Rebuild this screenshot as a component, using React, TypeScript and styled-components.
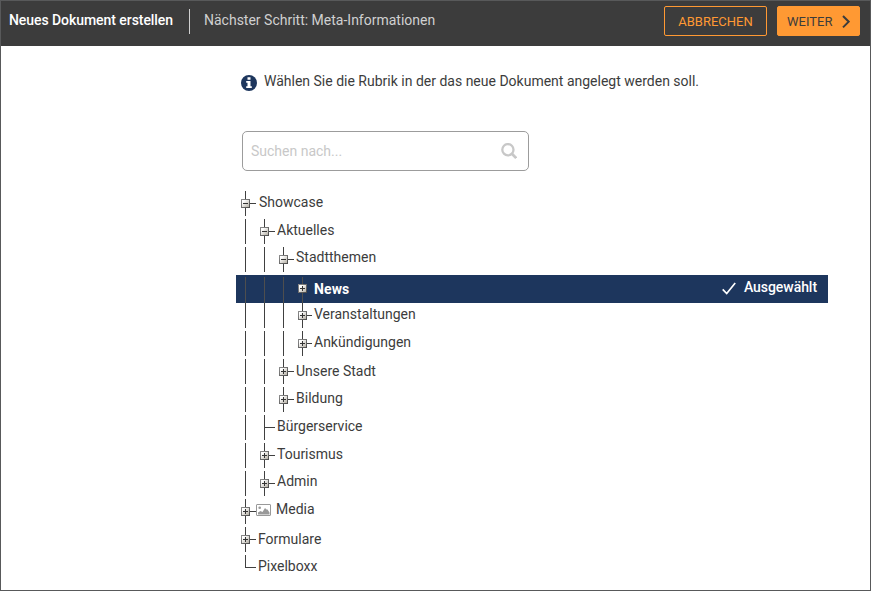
import React from 'react';
import styled, { createGlobalStyle } from 'styled-components';

const GlobalStyle = createGlobalStyle`
  *, *::before, *::after { box-sizing: border-box; }
  body { margin: 0; background: #fff; font-family: Roboto, sans-serif; }
`;

const Window = styled.div`
  width: 871px;
  height: 591px;
  overflow: hidden;
  border: 1px solid #58595a;
  background: #fff;
  color: #3c3c3c;
  font-size: 14px;
  line-height: 20px;
`;

const Header = styled.header`
  display: flex;
  align-items: flex-start;
  height: 45px;
  padding: 5px 10px 0 8px;
  background: #3c3c3c;
`;

const Title = styled.h1`
  width: 181px;
  height: 25px;
  margin: 3px 0 0;
  padding-top: 1px;
  border-right: 1px solid #d0d0d0;
  color: #fff;
  font-size: 14px;
  font-weight: 500;
  letter-spacing: -0.06px;
  line-height: 20px;
  white-space: nowrap;
`;

const NextStep = styled.div`
  flex: 1;
  padding: 4px 0 0 14px;
  color: #d0d0d0;
`;

const Button = styled.button<{ $primary?: boolean }>`
  display: flex;
  align-items: center;
  justify-content: ${(p) => (p.$primary ? 'flex-start' : 'center')};
  gap: 10px;
  width: ${(p) => (p.$primary ? 83 : 103)}px;
  height: 30px;
  margin-left: ${(p) => (p.$primary ? 10 : 0)}px;
  padding: ${(p) => (p.$primary ? '1px 0 0 9px' : '1px 0 0')};
  border: 1px solid #ff9933;
  border-radius: 2px;
  background: ${(p) => (p.$primary ? '#ff9933' : 'transparent')};
  color: ${(p) => (p.$primary ? '#3c3c3c' : '#ff9933')};
  font: 400 13px/20px Roboto, sans-serif;
`;

const Content = styled.main`
  width: 592px;
  margin-left: 235px;
  padding-top: 25px;
`;

const Hint = styled.div`
  display: flex;
  align-items: flex-start;
  gap: 7px;
  height: 60px;
  padding-left: 5px;
  white-space: nowrap;

  svg { margin-top: 4px; }
`;

const Search = styled.label`
  display: flex;
  align-items: center;
  justify-content: space-between;
  width: 287px;
  height: 40px;
  margin-left: 6px;
  padding: 0 11px 0 8px;
  border: 1px solid #9c9c9c;
  border-radius: 5px;
`;

const SearchInput = styled.input`
  width: 220px;
  padding: 0;
  border: 0;
  outline: 0;
  background: transparent;
  font: 400 14px/20px Roboto, sans-serif;

  &::placeholder { color: #c8c8c8; opacity: 1; }
`;

const Tree = styled.div`
  margin-top: 20px;
`;

const Row = styled.div<{ $selected?: boolean }>`
  display: flex;
  align-items: flex-start;
  height: 28px;
  padding-left: 5px;
  background: ${(p) => (p.$selected ? '#1d365d' : 'transparent')};
  color: ${(p) => (p.$selected ? '#fff' : '#3c3c3c')};

  > svg { flex: none; }
`;

const Label = styled.span<{ $top: number; $gap: number; $bold?: boolean; $spacing: number }>`
  flex: 1;
  margin-top: ${(p) => p.$top}px;
  padding-left: ${(p) => p.$gap}px;
  font-weight: ${(p) => (p.$bold ? 700 : 400)};
  letter-spacing: ${(p) => p.$spacing}px;
  white-space: nowrap;
`;

const Chosen = styled.span`
  display: flex;
  gap: 8px;
  margin: 2px 11px 0 0;
  font-weight: 500;
  letter-spacing: -0.05px;

  svg { margin-top: 5px; }
`;

type Kind = 'plus' | 'minus' | 'leaf' | 'last';

interface Node {
  label: string;
  depth: number;
  kind: Kind;
  top: number;
  gap?: number;
  spacing?: number;
  selected?: boolean;
  media?: boolean;
}

const nodes: Node[] = [
  { label: 'Showcase', depth: 0, kind: 'minus', top: 1, gap: 3 },
  { label: 'Aktuelles', depth: 1, kind: 'minus', top: 1 },
  { label: 'Stadtthemen', depth: 2, kind: 'minus', top: 0 },
  { label: 'News', depth: 3, kind: 'plus', top: 4, spacing: 0.1, selected: true },
  { label: 'Veranstaltungen', depth: 3, kind: 'plus', top: 1 },
  { label: 'Ankündigungen', depth: 3, kind: 'plus', top: 1 },
  { label: 'Unsere Stadt', depth: 2, kind: 'plus', top: 2 },
  { label: 'Bildung', depth: 2, kind: 'plus', top: 1 },
  { label: 'Bürgerservice', depth: 1, kind: 'leaf', top: 1 },
  { label: 'Tourismus', depth: 1, kind: 'plus', top: 1 },
  { label: 'Admin', depth: 1, kind: 'plus', top: 0 },
  { label: 'Media', depth: 0, kind: 'plus', top: 0, media: true },
  { label: 'Formulare', depth: 0, kind: 'plus', top: 2 },
  { label: 'Pixelboxx', depth: 0, kind: 'last', top: 1 },
];

const indents = [0, 19, 38, 56];

function Branches({ depth, kind, selected }: Node) {
  const x = depth * 19 + 4;
  const width = Math.max(indents[depth] + 15, x + 5);
  const top = selected ? 1 : 0;
  const line = selected ? '#4e4e4e' : '#404040';
  const lines = Array.from({ length: depth }, (_, i) => i * 19 + 4);
  return (
    <svg width={width} height="28" shapeRendering="crispEdges">
      <defs>
        <linearGradient id="box" x1="0" y1="0" x2="1" y2="1">
          <stop offset="0.2" stopColor="#fff" />
          <stop offset="1" stopColor="#b4afa4" />
        </linearGradient>
        <linearGradient id="edge" x1="0" y1="0" x2="1" y2="1">
          <stop offset="0" stopColor="#909090" />
          <stop offset="1" stopColor="#484848" />
        </linearGradient>
      </defs>
      {lines.map((l) => (
        <rect key={l} x={l} y={selected ? 2 : 0} width="1" height={selected ? 26 : 25} fill={line} />
      ))}
      <rect x={x} y={selected ? 2 : 0} width="1" height={kind === 'last' ? 13 : selected ? 26 : 25} fill={line} />
      {!selected && <rect x={x} y="12" width={width - x} height="1" fill={line} />}
      {(kind === 'plus' || kind === 'minus') && (
        <g transform={`translate(0 ${top})`}>
          <rect x={x - 4} y="8" width="9" height="9" fill="url(#edge)" />
          <rect x={x - 3} y="9" width="7" height="7" fill="url(#box)" />
          <rect x={x - 2} y="12" width="5" height="1" fill="#333" />
          {kind === 'plus' && <rect x={x} y="10" width="1" height="5" fill="#333" />}
        </g>
      )}
    </svg>
  );
}

const MediaIcon = () => (
  <svg width="15" height="28" viewBox="0 0 15 28">
    <rect x=".5" y="5.5" width="14" height="11" rx=".5" fill="#fff" stroke="#999" />
    <circle cx="3.7" cy="8.7" r="1.3" fill="#999" />
    <path d="M2 15.5v-2l2.5-1.5 2 1 2.5-4 1.5 1.5h1l2 3v2z" fill="#999" />
  </svg>
);

const InfoIcon = () => (
  <svg width="16" height="16" viewBox="0 0 16 16">
    <circle cx="8" cy="8" r="8" fill="#1d365d" />
    <path d="M6.5 2.3h3v2.4h-3zM5.2 6h4.3v5.2h1.3V13H5.2v-1.8h1.3V7.8H5.2z" fill="#fff" />
  </svg>
);

const SearchIcon = () => (
  <svg width="16" height="16" viewBox="0 0 16 16" fill="none" stroke="#c8c8c8">
    <circle cx="6.9" cy="6.7" r="5.6" strokeWidth="2.3" />
    <path d="M10.9 10.8l4.3 4.3" strokeWidth="2.7" />
  </svg>
);

const Chevron = () => (
  <svg width="8" height="14" viewBox="0 0 8 14" fill="none" stroke="#3c3c3c" strokeWidth="2">
    <path d="M1 1L6.7 6.7 1 12.4" />
  </svg>
);

const Check = () => (
  <svg width="14" height="13" viewBox="0 0 14 13" fill="none" stroke="#fff" strokeWidth="1.7">
    <path d="M.7 7.3L4.7 11.5 13.2 1" />
  </svg>
);

export default function App() {
  return (
    <>
      <GlobalStyle />
      <Window>
        <Header>
          <Title>Neues Dokument erstellen</Title>
          <NextStep>Nächster Schritt: Meta-Informationen</NextStep>
          <Button>ABBRECHEN</Button>
          <Button $primary>
            WEITER
            <Chevron />
          </Button>
        </Header>
        <Content>
          <Hint>
            <InfoIcon />
            <span>Wählen Sie die Rubrik in der das neue Dokument angelegt werden soll.</span>
          </Hint>
          <Search>
            <SearchInput placeholder="Suchen nach..." />
            <SearchIcon />
          </Search>
          <Tree>
            {nodes.map((node) => (
              <Row key={node.label} $selected={node.selected}>
                <Branches {...node} />
                {node.media && <MediaIcon />}
                <Label
                  $top={node.top}
                  $gap={node.media ? 5 : node.gap ?? 2}
                  $bold={node.selected}
                  $spacing={node.spacing ?? 0}
                >
                  {node.label}
                </Label>
                {node.selected && (
                  <Chosen>
                    <Check />
                    Ausgewählt
                  </Chosen>
                )}
              </Row>
            ))}
          </Tree>
        </Content>
      </Window>
    </>
  );
}
